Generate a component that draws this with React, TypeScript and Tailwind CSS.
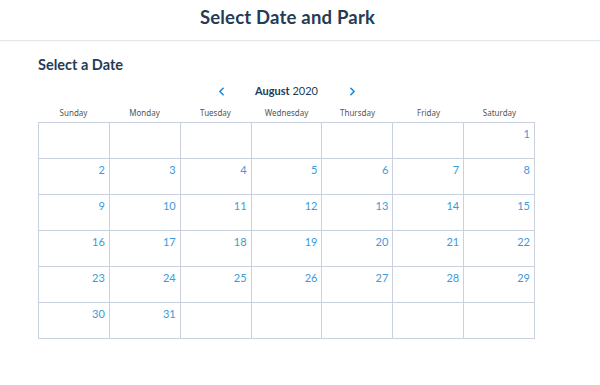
import { ChevronLeft, ChevronRight } from "lucide-react";

const days = ["Sunday", "Monday", "Tuesday", "Wednesday", "Thursday", "Friday", "Saturday"];

// August 2020 starts on a Saturday
const cells: (number | null)[] = [
  ...Array(6).fill(null),
  ...Array.from({ length: 31 }, (_, i) => i + 1),
  ...Array(5).fill(null),
];

export default function App() {
  return (
    <div className="w-[600px] h-[385px] bg-white text-[#253b56] font-['Lato','Noto_Sans',sans-serif]">
      {/* header */}
      <header className="h-[41px] flex items-center justify-center pr-[25px] border-b border-[#e6e8eb] shadow-[0_1px_2px_rgba(0,0,0,0.04)]">
        <h1 className="text-[18.5px] font-bold pb-[4px] tracking-[0.2px]">Select Date and Park</h1>
      </header>

      <div className="pl-[38px] pt-[15px]">
        <h2 className="text-[14.5px] font-bold leading-[18px]">Select a Date</h2>

        <div className="w-[497px]">
          <div className="flex items-center justify-center gap-[26px] mt-[9px] h-[16px]">
            <ChevronLeft className="w-[13px] h-[13px] text-[#1c8ad6]" strokeWidth={3} />
            <span className="text-[11px] w-[66px] text-center">
              <span className="font-bold">August</span> 2020
            </span>
            <ChevronRight className="w-[13px] h-[13px] text-[#1c8ad6]" strokeWidth={3} />
          </div>

          <div className="grid grid-cols-7 mt-[7px] h-[14px] items-center">
            {days.map((d) => (
              <div key={d} className="text-center text-[8px] text-[#555] font-['Noto_Sans',sans-serif]">
                {d}
              </div>
            ))}
          </div>

          <div className="grid grid-cols-7 mt-[2px] border-l border-t border-[#c8d1dd]">
            {cells.map((n, i) => (
              <div
                key={i}
                className="h-[36px] border-r border-b border-[#c8d1dd] text-right pr-[4px] pt-[3px] text-[11px] text-[#3d9ad8]"
              >
                {n ?? ""}
              </div>
            ))}
          </div>
        </div>
      </div>
    </div>
  );
}
